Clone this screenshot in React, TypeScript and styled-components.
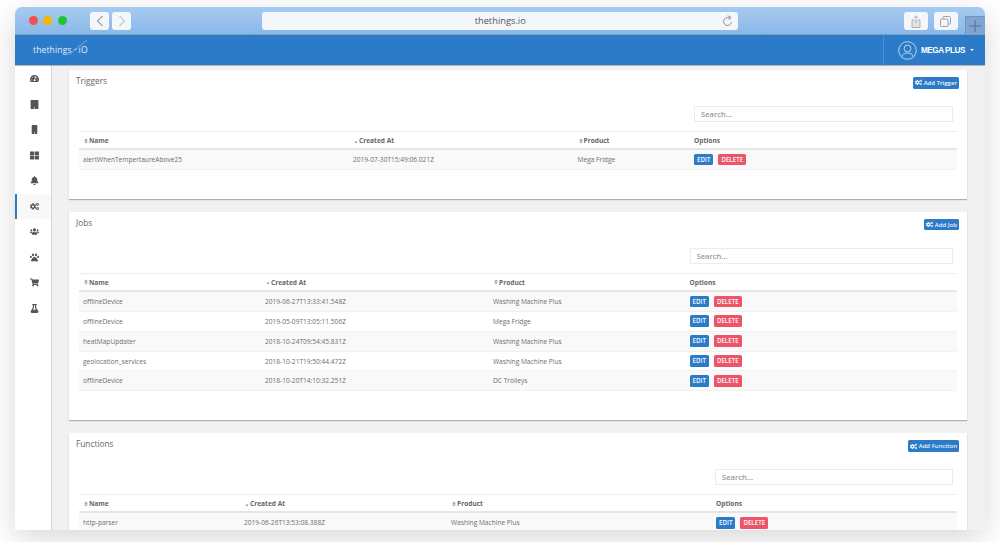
import React from 'react';
import styled, { createGlobalStyle } from 'styled-components';
import {
  FaBell,
  FaCogs,
  FaFlask,
  FaMobile,
  FaPaw,
  FaShoppingCart,
  FaSort,
  FaSortDown,
  FaTablet,
  FaTachometerAlt,
  FaThLarge,
  FaUsers,
} from 'react-icons/fa';

const GlobalStyle = createGlobalStyle`
  html, body {
    margin: 0;
    padding: 0;
    background: #fff;
    font-family: "Open Sans", "Liberation Sans", sans-serif;
    overflow: hidden;
  }
  * { box-sizing: border-box; }
`;

const Page = styled.div`
  width: 1000px;
  height: 542px;
  padding: 7px 15px 12px;
`;

const BrowserWindow = styled.div`
  height: 523px;
  border-radius: 7px 7px 0 0;
  overflow: hidden;
  display: flex;
  flex-direction: column;
  background: #f1f1f1;
  box-shadow: 0 8px 30px rgba(0, 0, 0, 0.16);
`;

const TitleBar = styled.div`
  height: 28px;
  flex: none;
  display: flex;
  align-items: flex-start;
  padding: 5px 0 0 14px;
  background: linear-gradient(#a7cbf1, #8ab8e8);
  border-bottom: 1px solid #7f9fc2;
`;

const Light = styled.span<{ $color: string }>`
  width: 9px;
  height: 9px;
  margin: 4px 5.5px 0 0;
  border-radius: 50%;
  background: ${(p) => p.$color};
`;

const ChromeButton = styled.div<{ $width: number }>`
  width: ${(p) => p.$width}px;
  height: 18px;
  flex: none;
  display: flex;
  align-items: center;
  justify-content: center;
  border-radius: 3px;
  background: #f3f6fa;
`;

const NavButtons = styled.div`
  display: flex;
  gap: 3px;
  margin-left: 18px;
`;

const UrlBar = styled.div`
  position: relative;
  width: 476px;
  height: 18px;
  margin-left: 131px;
  border-radius: 3px;
  background: #f3f6fa;
  color: #555;
  font-size: 9.3px;
  line-height: 18px;
  text-align: center;
`;

const Reload = styled.svg`
  position: absolute;
  right: 5px;
  top: 3px;
`;

const ToolButtons = styled.div`
  display: flex;
  gap: 6px;
  margin-left: 166px;
`;

const NewTab = styled.div`
  width: 20px;
  height: 18px;
  margin: 4px 0 0 7px;
  flex: none;
  display: flex;
  align-items: center;
  justify-content: center;
  background: #7fa6d2;
  border: 1px solid #7594b8;
  border-right: 0;
  border-bottom: 0;
`;

const Header = styled.header`
  height: 31px;
  flex: none;
  display: flex;
  align-items: center;
  justify-content: space-between;
  background: #2c7bc9;
  border-bottom: 1px solid #b5b5b5;
`;

const Logo = styled.div`
  position: relative;
  margin-left: 18px;
  color: #e3eefa;
  font-size: 8.6px;
  letter-spacing: 0.1px;
  display: flex;
  align-items: center;
  gap: 7px;
`;

const LogoSlash = styled.svg`
  position: absolute;
  left: 35px;
  top: -5px;
`;

const UserMenu = styled.div`
  width: 102px;
  height: 100%;
  display: flex;
  align-items: center;
  padding-left: 14px;
  border-left: 1px solid #4a8dd0;
  color: #fff;
  font-size: 8.2px;
  font-weight: 700;
  letter-spacing: -0.5px;
  font-family: "Liberation Sans", sans-serif;
`;

const UserName = styled.span`
  margin-left: 4px;
`;

const UserCaret = styled.span`
  margin-left: 5px;
  border-top: 2.5px solid #fff;
  border-left: 2.5px solid transparent;
  border-right: 2.5px solid transparent;
`;

const Body = styled.div`
  flex: 1;
  min-height: 0;
  display: flex;
`;

const Sidebar = styled.nav`
  width: 37px;
  flex: none;
  background: #fff;
  border-right: 1px solid #d5d5d5;
`;

const SideItem = styled.div<{ $active?: boolean }>`
  height: 25.5px;
  display: flex;
  align-items: center;
  justify-content: center;
  color: #555;
  font-size: 9px;
  background: ${(p) => (p.$active ? '#f8f8f8' : 'transparent')};
  border-left: 2px solid ${(p) => (p.$active ? '#2c7bc9' : 'transparent')};
`;

const Main = styled.main`
  flex: 1;
  min-width: 0;
  padding: 4px 18px 0 17px;
  display: flex;
  flex-direction: column;
  gap: 13px;
`;

const Card = styled.section`
  flex: none;
  background: #fff;
  padding: 0 10px 29px;
  box-shadow: 0 1px 1px rgba(0, 0, 0, 0.28);
`;

const CardHead = styled.div`
  height: 36px;
  display: flex;
  justify-content: space-between;
  align-items: flex-start;
  margin-right: -2px;
`;

const CardTitle = styled.h2`
  margin: 5px 0 0 -3px;
  color: #666;
  font-size: 8.3px;
  line-height: 12px;
  font-weight: 400;
`;

const AddButton = styled.button`
  height: 11.5px;
  margin-top: 7px;
  padding: 0 2px 0 2.5px;
  display: flex;
  align-items: center;
  gap: 1.5px;
  border: 0;
  border-radius: 1.5px;
  background: #2c7bc9;
  color: #f0f6fc;
  font-family: inherit;
  font-size: 6px;
  font-weight: 600;
`;

const SearchRow = styled.div`
  display: flex;
  justify-content: flex-end;
  padding-right: 4px;
`;

const SearchInput = styled.input<{ $width: number }>`
  width: ${(p) => p.$width}px;
  height: 16px;
  padding: 0 6px;
  border: 1px solid #ececec;
  background: #fff;
  font-family: inherit;
  font-size: 7.6px;
  font-weight: 600;

  &::placeholder {
    color: #999;
    opacity: 1;
  }
`;

const Table = styled.div`
  margin-top: 9px;
  border-top: 1px solid #eee;
`;

const Row = styled.div<{ $cols: string }>`
  display: grid;
  grid-template-columns: ${(p) => p.$cols};
  height: 19.9px;
  align-items: center;
  padding-left: 4px;
  font-size: 6.6px;
  color: #6d6d6d;
  border-bottom: 1px solid #f2f2f2;

  &:nth-child(even) {
    background: #f9f9f9;
  }
`;

const HeadRow = styled(Row)`
  height: 18px;
  padding-top: 1px;
  font-weight: 700;
  color: #666;
  border-bottom: 2px solid #e6e6e6;
`;

const HeadCell = styled.div`
  display: flex;
  align-items: center;
  font-size: 6.6px;
`;

const SortIcon = styled.span`
  display: inline-flex;
  color: #999;
  font-size: 6px;
`;

const Options = styled.div`
  display: flex;
  gap: 5px;
`;

const ActionButton = styled.button<{ $danger?: boolean }>`
  height: 11.5px;
  padding: 0 3px;
  border: 0;
  border-radius: 1.5px;
  background: ${(p) => (p.$danger ? '#ee5468' : '#2c7bc9')};
  color: #f5f8fb;
  font-family: inherit;
  font-size: 6.2px;
  font-weight: 600;
  line-height: 11.5px;
`;

type Item = { name: string; created: string; product: string };

type PanelProps = {
  title: string;
  addLabel: string;
  searchWidth: number;
  cols: string;
  items: Item[];
};

const triggers: Item[] = [
  { name: 'alertWhenTempertaureAbove25', created: '2019-07-30T15:49:06.021Z', product: 'Mega Fridge' },
];

const jobs: Item[] = [
  { name: 'offlineDevice', created: '2019-06-27T13:33:41.548Z', product: 'Washing Machine Plus' },
  { name: 'offlineDevice', created: '2019-05-09T13:05:11.506Z', product: 'Mega Fridge' },
  { name: 'heatMapUpdater', created: '2018-10-24T09:54:45.831Z', product: 'Washing Machine Plus' },
  { name: 'geolocation_services', created: '2018-10-21T19:50:44.472Z', product: 'Washing Machine Plus' },
  { name: 'offlineDevice', created: '2018-10-20T14:10:32.251Z', product: 'DC Trolleys' },
];

const functions: Item[] = [
  { name: 'http-parser', created: '2019-06-26T13:53:08.388Z', product: 'Washing Machine Plus' },
];

const Panel = ({ title, addLabel, searchWidth, cols, items }: PanelProps) => {
  return (
    <Card>
      <CardHead>
        <CardTitle>{title}</CardTitle>
        <AddButton>
          <FaCogs size={7} />
          {addLabel}
        </AddButton>
      </CardHead>
      <SearchRow>
        <SearchInput $width={searchWidth} placeholder="Search..." />
      </SearchRow>
      <Table>
        <HeadRow $cols={cols}>
          <HeadCell>
            <SortIcon>
              <FaSort />
            </SortIcon>
            Name
          </HeadCell>
          <HeadCell>
            <SortIcon>
              <FaSortDown />
            </SortIcon>
            Created At
          </HeadCell>
          <HeadCell>
            <SortIcon>
              <FaSort />
            </SortIcon>
            Product
          </HeadCell>
          <HeadCell>Options</HeadCell>
        </HeadRow>
        {items.map((item) => (
          <Row $cols={cols} key={item.created}>
            <div>{item.name}</div>
            <div>{item.created}</div>
            <div>{item.product}</div>
            <Options>
              <ActionButton>EDIT</ActionButton>
              <ActionButton $danger>DELETE</ActionButton>
            </Options>
          </Row>
        ))}
      </Table>
    </Card>
  );
};

const Chevron = ({ back }: { back?: boolean }) => (
  <svg width="8" height="12" viewBox="0 0 8 12" fill="none" stroke={back ? '#666' : '#aaa'} strokeWidth="1">
    <path d={back ? 'M6.5 1 1.5 6l5 5' : 'M1.5 1l5 5-5 5'} />
  </svg>
);

const App = () => {
  return (
    <Page>
      <GlobalStyle />
      <BrowserWindow>
        <TitleBar>
          <Light $color="#f4504e" />
          <Light $color="#f8b500" />
          <Light $color="#1fc436" />
          <NavButtons>
            <ChromeButton $width={19}>
              <Chevron back />
            </ChromeButton>
            <ChromeButton $width={19}>
              <Chevron />
            </ChromeButton>
          </NavButtons>
          <UrlBar>
            thethings.io
            <Reload width="11" height="12" viewBox="0 0 11 12" fill="none" stroke="#888" strokeWidth="0.9">
              <path d="M8.8 4.2A4 4 0 1 0 9.5 7" />
              <path d="M5.6 0.8 8.8 2.2 6.6 4.6" />
            </Reload>
          </UrlBar>
          <ToolButtons>
            <ChromeButton $width={24}>
              <svg width="10" height="13" viewBox="0 0 10 13" fill="none" stroke="#aaa" strokeWidth="0.9">
                <path d="M3 5H1v7.5h8V5H7" fill="#e0e3e7" />
                <path d="M5 8V1M3 2.8 5 .8l2 2" />
              </svg>
            </ChromeButton>
            <ChromeButton $width={24}>
              <svg width="11" height="11" viewBox="0 0 11 11" fill="none" stroke="#999" strokeWidth="0.9">
                <rect x="3" y="0.5" width="7.5" height="7.5" rx="1" />
                <rect x="0.5" y="3" width="7.5" height="7.5" rx="1" fill="#f3f6fa" />
              </svg>
            </ChromeButton>
          </ToolButtons>
          <NewTab>
            <svg width="12" height="12" viewBox="0 0 12 12" stroke="#56708f" strokeWidth="1">
              <path d="M6 0v12M0 6h12" />
            </svg>
          </NewTab>
        </TitleBar>
        <Header>
          <Logo>
            <span>thethings</span>
            <LogoSlash width="20" height="17" viewBox="0 0 20 17" stroke="#a9c9ea" strokeWidth="0.6" fill="none">
              <path d="M1 16 19 1" />
              <path d="M6.5 10.5 8.5 10" stroke="#e3eefa" strokeWidth="0.9" />
            </LogoSlash>
            <span>iO</span>
          </Logo>
          <UserMenu>
            <svg width="19" height="19" viewBox="0 0 19 19" fill="none" stroke="#dbe8f6" strokeWidth="0.8">
              <circle cx="9.5" cy="9.5" r="8.8" />
              <circle cx="9.5" cy="7.5" r="3.4" />
              <path d="M3.6 15.8c.8-2.6 3-3.8 5.9-3.8s5.1 1.2 5.9 3.8" />
            </svg>
            <UserName>MEGA PLUS</UserName>
            <UserCaret />
          </UserMenu>
        </Header>
        <Body>
          <Sidebar>
            <SideItem>
              <FaTachometerAlt />
            </SideItem>
            <SideItem>
              <FaTablet />
            </SideItem>
            <SideItem>
              <FaMobile />
            </SideItem>
            <SideItem>
              <FaThLarge />
            </SideItem>
            <SideItem>
              <FaBell />
            </SideItem>
            <SideItem $active>
              <FaCogs />
            </SideItem>
            <SideItem>
              <FaUsers />
            </SideItem>
            <SideItem>
              <FaPaw />
            </SideItem>
            <SideItem>
              <FaShoppingCart />
            </SideItem>
            <SideItem>
              <FaFlask />
            </SideItem>
          </Sidebar>
          <Main>
            <Panel
              title="Triggers"
              addLabel="Add Trigger"
              searchWidth={259}
              cols="270px 224.5px 116.5px 1fr"
              items={triggers}
            />
            <Panel
              title="Jobs"
              addLabel="Add Job"
              searchWidth={263.5}
              cols="182px 228px 196.5px 1fr"
              items={jobs}
            />
            <Panel
              title="Functions"
              addLabel="Add Function"
              searchWidth={238}
              cols="161px 207px 265px 1fr"
              items={functions}
            />
          </Main>
        </Body>
      </BrowserWindow>
    </Page>
  );
};

export default App;
